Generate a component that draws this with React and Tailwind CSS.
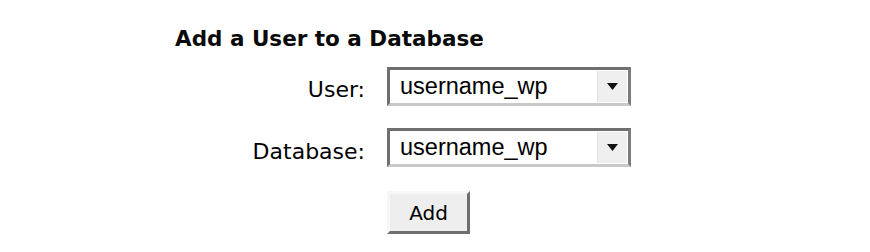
import React from "react";

const SelectBox = ({ value }) => (
  <div className="w-[244px] h-[39px] flex border-[3px] border-t-[#6f6f6f] border-l-[#6f6f6f] border-r-[#7c7c7c] border-b-[#c9c9c9] bg-white">
    <div className="flex-1 flex items-center pl-[10px] font-['Liberation_Sans',Arial,sans-serif] text-[23.5px] text-black">
      {value}
    </div>
    <div className="w-[30px] my-[1px] mr-[1px] flex items-center justify-center bg-[#efefef] border-l border-[#e2e2e2]">
      <svg width="11" height="7" viewBox="0 0 11 7">
        <path d="M0 0 H11 L5.5 7 Z" fill="#111" />
      </svg>
    </div>
  </div>
);

export default function App() {
  return (
    <div className="w-[870px] h-[252px] bg-white pl-[175px] pt-[26px] font-['DejaVu_Sans',Verdana,sans-serif] text-black">
      <h2 className="text-[21.5px] font-bold leading-[25px] text-[#0a0a0a]">Add a User to a Database</h2>

      <div className="mt-[16px] grid grid-cols-[190px_244px] gap-x-[22px] gap-y-[22px] items-start">
        <label className="text-right text-[22px] leading-[25px] pt-[10px]">User:</label>
        <SelectBox value="username_wp" />

        <label className="text-right text-[22px] leading-[25px] pt-[11px]">Database:</label>
        <SelectBox value="username_wp" />

        <div />
        <button className="mt-[2px] w-[83px] h-[43px] bg-[#eeeeee] border-[3px] border-t-[#f7f7f7] border-l-[#f7f7f7] border-r-[#6f6f6f] border-b-[#6f6f6f] text-[20px] leading-none text-black">
          Add
        </button>
      </div>
    </div>
  );
}
